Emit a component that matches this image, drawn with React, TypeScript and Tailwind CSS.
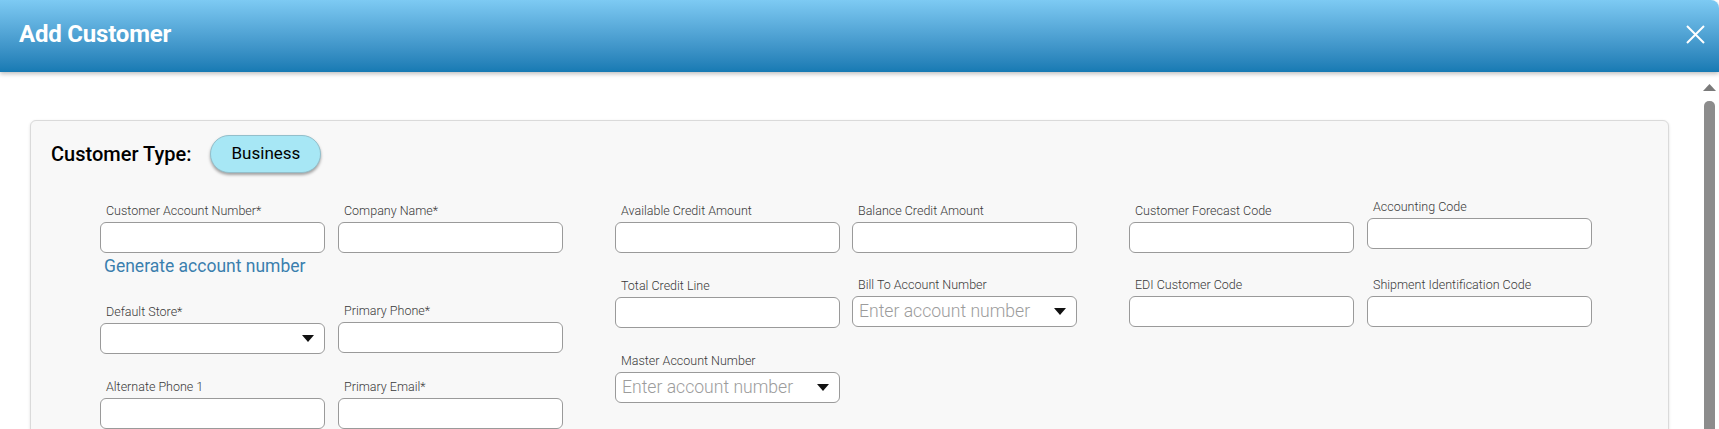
import React from 'react';

type FieldProps = {
    label: string;
    select?: boolean;
    placeholder?: string;
    className?: string;
    children?: React.ReactNode;
};

const Caret: React.FC = () => (
    <svg width="12" height="7" viewBox="0 0 12 7" className="shrink-0">
        <path d="M0 0 L12 0 L6 7 Z" fill="#111" />
    </svg>
);

const Field: React.FC<FieldProps> = ({ label, select, placeholder, className, children }) => {
    return (
        <div className={`flex flex-col ${className ?? ''}`}>
            <label className="block pl-[6px] pt-[2px] mb-[3px] text-[12.5px] leading-[16px] font-light text-[#3a3a3a] whitespace-nowrap">
                {label}
            </label>
            {select ? (
                <div className="h-[31px] w-[225px] rounded-[6px] border border-[#9a9a9a] bg-white flex items-center pl-[6px] pr-[10px]">
                    <span className="flex-1 text-[17.6px] font-light text-[#9c9c9c] leading-none whitespace-nowrap">
                        {placeholder}
                    </span>
                    <Caret />
                </div>
            ) : (
                <input
                    type="text"
                    className="h-[31px] w-[225px] rounded-[6px] border border-[#9a9a9a] bg-white outline-none px-[6px]"
                />
            )}
            {children}
        </div>
    );
};

const App: React.FC = () => {
    return (
        <div className="h-[429px] w-full overflow-hidden bg-white flex flex-col font-['Roboto','Liberation_Sans',sans-serif]">
            <header className="relative z-10 h-[72px] shrink-0 flex items-center justify-between pl-[19px] pr-[14px] rounded-tr-[8px] bg-gradient-to-b from-[#7dcaf3] to-[#167ab3] shadow-[0_2px_4px_rgba(0,0,0,0.25)]">
                <h1 className="text-[24px] font-bold text-white tracking-[-0.2px] mb-[4px]">Add Customer</h1>
                <svg width="19" height="19" viewBox="0 0 19 19" className="mb-[4px]">
                    <path d="M1 1 L18 18 M18 1 L1 18" stroke="white" strokeWidth="2" />
                </svg>
            </header>

            <div className="flex flex-1 min-h-0">
                <main className="flex-1 pt-[48px] pl-[30px] pr-[33px]">
                    <div className="h-[400px] rounded-[6px] border border-[#dadada] bg-[#f8f8f8] shadow-[0_1px_3px_rgba(0,0,0,0.12)] pt-[14px] pl-[20px]">
                        <div className="flex items-center gap-[19px]">
                            <span className="text-[20px] font-medium text-black">Customer Type:</span>
                            <button className="h-[38px] w-[111px] rounded-full bg-[#a7e7f5] border border-[#93bfcb] shadow-[0_2px_3px_rgba(0,0,0,0.35)] text-[17px] text-black">
                                Business
                            </button>
                        </div>

                        <div className="mt-[28px] ml-[49px] flex items-start gap-[52px]">
                            <div className="grid grid-cols-[225px_225px] gap-x-[13px] gap-y-[23px] items-start">
                                <Field label="Customer Account Number*">
                                    <a className="block pl-[4px] text-[17.5px] leading-[26px] text-[#3b7fae] whitespace-nowrap cursor-pointer">
                                        Generate account number
                                    </a>
                                </Field>
                                <Field label="Company Name*" />
                                <Field label="Default Store*" select />
                                <Field label="Primary Phone*" className="-mt-[1px]" />
                                <Field label="Alternate Phone 1" />
                                <Field label="Primary Email*" />
                            </div>

                            <div className="grid grid-cols-[225px_225px] gap-x-[12px] gap-y-[23px] items-start">
                                <Field label="Available Credit Amount" />
                                <Field label="Balance Credit Amount" />
                                <Field label="Total Credit Line" />
                                <Field label="Bill To Account Number" select placeholder="Enter account number" className="-mt-[1px]" />
                                <Field label="Master Account Number" select placeholder="Enter account number" />
                            </div>

                            <div className="grid grid-cols-[225px_225px] gap-x-[13px] gap-y-[23px] items-start">
                                <Field label="Customer Forecast Code" />
                                <Field label="Accounting Code" className="-mt-[4px]" />
                                <Field label="EDI Customer Code" className="-mt-[1px]" />
                                <Field label="Shipment Identification Code" className="-mt-[1px]" />
                            </div>
                        </div>
                    </div>
                </main>

                <div className="w-[17px] shrink-0 flex flex-col items-center pr-[2px] pt-[12px]">
                    <svg width="13" height="7" viewBox="0 0 13 7">
                        <path d="M0 7 L6.5 0 L13 7 Z" fill="#7a7a7a" />
                    </svg>
                    <div className="mt-[10px] w-[11px] flex-1 rounded-t-[5px] bg-[#8c8c8c]" />
                </div>
            </div>
        </div>
    );
};

export default App;
